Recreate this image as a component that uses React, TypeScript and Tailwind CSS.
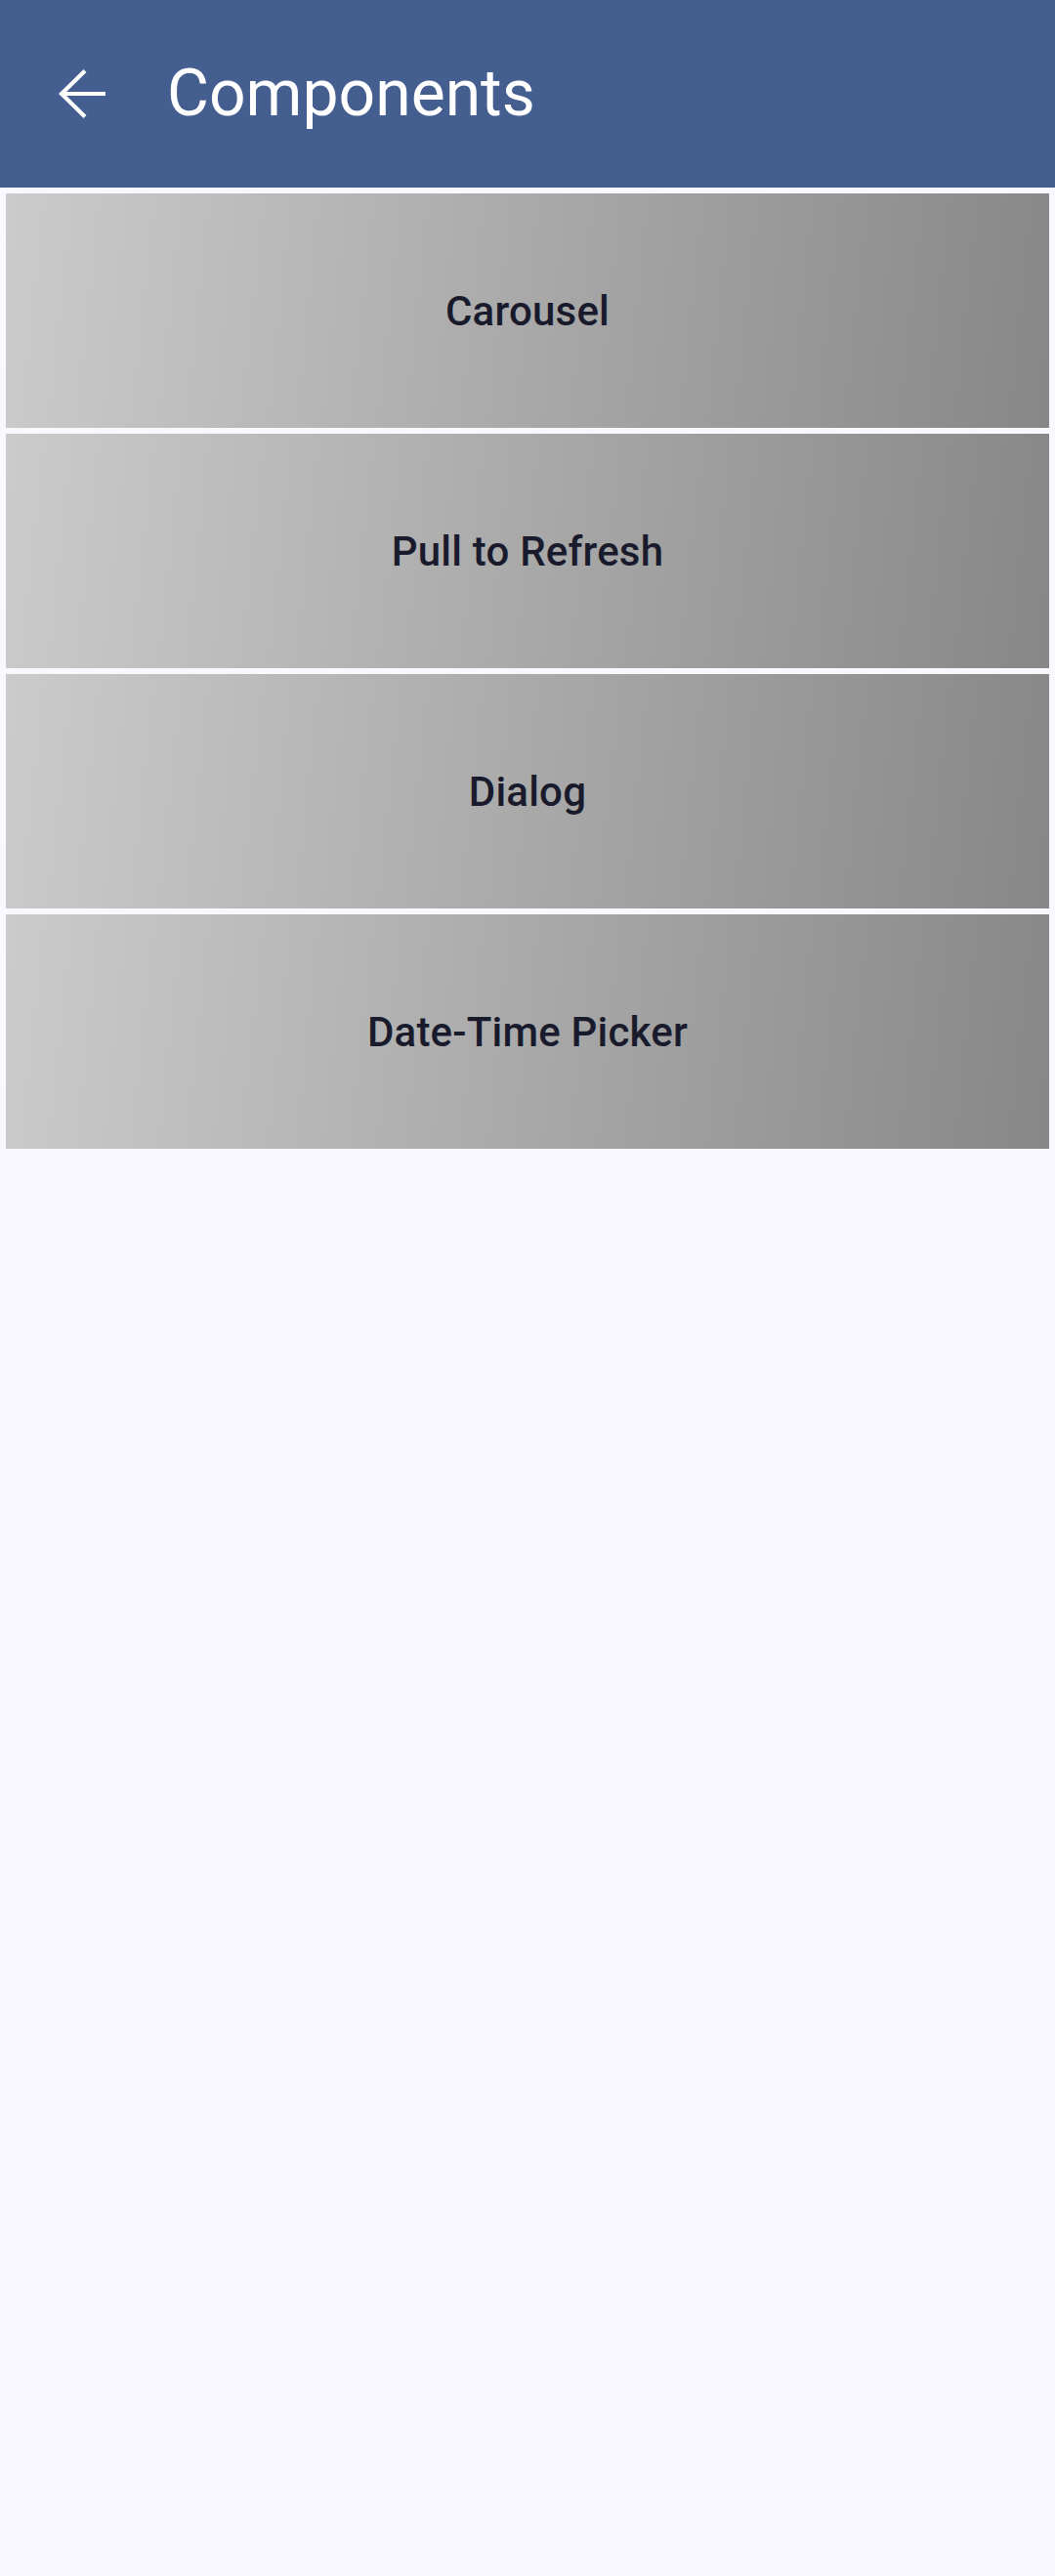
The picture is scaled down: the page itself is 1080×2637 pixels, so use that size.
import React from "react";

const items = ["Carousel", "Pull to Refresh", "Dialog", "Date-Time Picker"];

export default function App() {
  return (
    <div className="min-h-[2637px] w-[1080px] bg-[#f9f8fe]" style={{ fontFamily: "Roboto, sans-serif" }}>
      <header className="flex h-[192px] items-center bg-[#435e8f]">
        <svg className="ml-[59px] shrink-0" width="50" height="50" viewBox="0 0 50 50" fill="none" stroke="white" strokeWidth="4.2">
          <path d="M3 25 H49" />
          <path d="M28 1.5 L4 25 L28 48.5" />
        </svg>
        <h1 className="ml-[62px] text-[66px] leading-none text-white">Components</h1>
      </header>
      <div className="flex flex-col gap-[6px] px-[6px] pt-[6px]">
        {items.map((t) => (
          <div
            key={t}
            className="flex h-[240px] items-center justify-center bg-[linear-gradient(96deg,#cbcbcb,#878787)]"
          >
            <span className="text-[42px] font-medium tracking-[0.2px] text-[#191b2d]">{t}</span>
          </div>
        ))}
      </div>
    </div>
  );
}
